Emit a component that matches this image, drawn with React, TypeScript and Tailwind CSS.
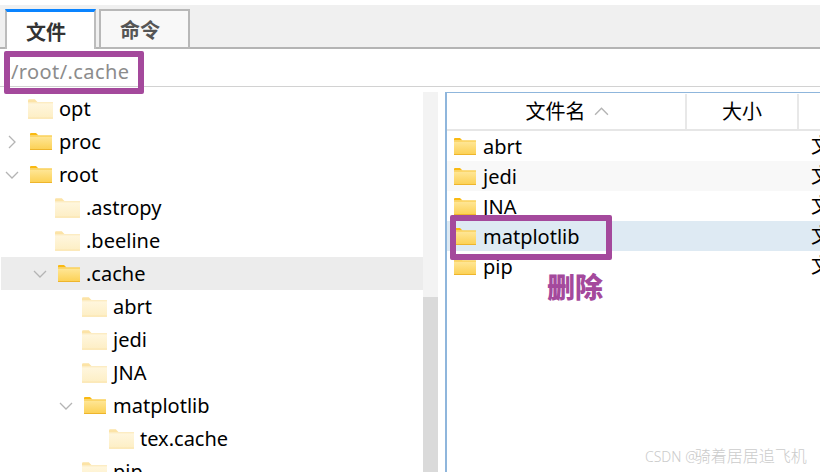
import React from "react";

type TreeNode = {
  name: string;
  indent: string;
  chevron?: "right" | "down";
  solid?: boolean;
  active?: boolean;
};

const tree: TreeNode[] = [
  { name: "opt", indent: "pl-0" },
  { name: "proc", indent: "pl-0", chevron: "right", solid: true },
  { name: "root", indent: "pl-0", chevron: "down", solid: true },
  { name: ".astropy", indent: "pl-[27px]" },
  { name: ".beeline", indent: "pl-[27px]" },
  { name: ".cache", indent: "pl-[27px]", chevron: "down", solid: true, active: true },
  { name: "abrt", indent: "pl-[54px]" },
  { name: "jedi", indent: "pl-[54px]" },
  { name: "JNA", indent: "pl-[54px]" },
  { name: "matplotlib", indent: "pl-[54px]", chevron: "down", solid: true },
  { name: "tex.cache", indent: "pl-[81px]" },
  { name: "pip", indent: "pl-[54px]" },
];

const files = ["abrt", "jedi", "JNA", "matplotlib", "pip"];

const fontStack = "font-['Noto_Sans','Noto_Sans_CJK_SC',sans-serif]";

function Folder({ pale }: { pale?: boolean }) {
  const id = pale ? "folder-pale" : "folder-solid";
  return (
    <svg
      viewBox="0 0 22 17"
      className={pale ? "h-[20px] w-[25px] shrink-0" : "h-[17px] w-[22px] shrink-0"}
    >
      <defs>
        <linearGradient id={id} x1="0" y1="0" x2="0" y2="1">
          <stop offset="0" stopColor={pale ? "#fff7e0" : "#ffe89c"} />
          <stop offset="1" stopColor={pale ? "#fdeec4" : "#fcd052"} />
        </linearGradient>
      </defs>
      <path d="M0 1a1 1 0 0 1 1-1h5l2.5 2.5H0z" fill={pale ? "#fce3a6" : "#f9b912"} />
      <rect x="0" y="2.5" width="22" height="14.5" rx="0.5" fill={`url(#${id})`} />
      <rect x="0" y="2.5" width="22" height="1" fill={pale ? "#fce9bb" : "#f8c63c"} />
      <rect x="0" y="16" width="22" height="1" fill={pale ? "#fbe4ae" : "#eeb52c"} />
    </svg>
  );
}

function Chevron({ dir, className }: { dir: "right" | "down" | "up"; className?: string }) {
  const d = dir === "right" ? "M4 1l6 6-6 6" : dir === "down" ? "M1 4l6 6 6-6" : "M1 10l6-6 6 6";
  return (
    <svg viewBox="0 0 14 14" className={className} fill="none" stroke="#b4b4b4" strokeWidth="1.3">
      <path d={d} />
    </svg>
  );
}

function TreeRow({ node }: { node: TreeNode }) {
  return (
    <div
      className={`flex h-[33px] shrink-0 items-center ${node.indent} ${
        node.active ? "ml-px bg-[#ececec] -indent-px" : ""
      }`}
    >
      <div className="flex w-[26px] shrink-0 items-center justify-center pr-[3px]">
        {node.chevron && <Chevron dir={node.chevron} className="h-[14px] w-[14px]" />}
      </div>
      <div className={`flex w-[33px] shrink-0 ${node.solid ? "pl-[4px]" : "pl-[2px]"}`}>
        <Folder pale={!node.solid} />
      </div>
      <span className="text-[20px] leading-none text-black">{node.name}</span>
    </div>
  );
}

export default function App() {
  return (
    <div className={`relative flex h-[472px] w-[820px] flex-col overflow-hidden bg-white ${fontStack}`}>
      {/* tab strip */}
      <div className="mt-[5px] flex h-[44px] shrink-0 items-end border-b-2 border-[#b4b4b4] bg-[#f0f0f0] pl-[5px]">
        <div className="-mb-[2px] flex h-[40px] w-[91px] items-center justify-center border-r-2 border-l-2 border-t-[3px] border-[#bcbcbc] border-t-[#0a84ff] bg-white pt-[4px] pr-[9px] text-[20px] font-bold text-[#333]">
          文件
        </div>
        <div className="ml-[3px] -mb-[2px] flex h-[40px] w-[91px] items-center justify-center border-2 border-[#b8b8b8] bg-[#f8f8f8] pt-[3px] pr-[9px] text-[20px] font-bold text-[#555]">
          命令
        </div>
      </div>

      {/* path bar */}
      <div className="flex h-[38px] shrink-0 items-center border-b border-[#d2d2d2] pt-[8px] pl-[11px] text-[20px] tracking-[0.4px] text-[#8c8c8c]">
        /root/.cache
      </div>

      <div className="mt-[5px] flex min-h-0 flex-1">
        {/* directory tree */}
        <div className="flex w-[423px] shrink-0 flex-col overflow-hidden">
          {tree.map((node) => (
            <TreeRow key={node.name + node.indent} node={node} />
          ))}
        </div>

        {/* tree scrollbar */}
        <div className="flex w-[15px] shrink-0 flex-col bg-[#f3f3f3]">
          <div className="h-[205px] shrink-0" />
          <div className="flex-1 bg-[#dadada]" />
        </div>

        {/* file list */}
        <div className="ml-[7px] flex min-w-0 flex-1 flex-col overflow-hidden border-t border-l-2 border-[#8fb6dc]">
          <div className="flex h-[38px] shrink-0 border-b-2 border-[#e6e6e6] pt-[1px] text-[20px] text-black">
            <div className="flex w-[240px] shrink-0 items-center justify-center gap-[8px] border-r-2 border-[#e8e8e8] pl-[2px]">
              <span>文件名</span>
              <Chevron dir="up" className="h-[15px] w-[15px]" />
            </div>
            <div className="flex w-[112px] shrink-0 items-center justify-center border-r-2 border-[#e8e8e8]">
              大小
            </div>
          </div>
          {files.map((name, i) => (
            <div
              key={name}
              className={`flex h-[30px] shrink-0 items-center pl-[7px] text-[20px] leading-none text-black ${
                name === "matplotlib" ? "bg-[#deeaf3]" : i === 1 ? "bg-[#f8f8f8]" : ""
              }`}
            >
              <div className="flex w-[29px] shrink-0">
                <Folder />
              </div>
              <span className="w-[328px] shrink-0 pt-[2px]">{name}</span>
              <span className="whitespace-nowrap">文件夹</span>
            </div>
          ))}
        </div>
      </div>

      {/* annotations drawn on top of the window */}
      <div className="absolute top-[51px] left-[4px] h-[43px] w-[140px] rounded-[2px] border-[6px] border-[#a4499c]" />
      <div className="absolute top-[215px] left-[450px] h-[45px] w-[162px] rounded-[2px] border-[6px] border-[#a4499c]" />
      <div className="absolute top-[268px] left-[547px] text-[28px] leading-[38px] font-black text-[#a4499c]">
        删除
      </div>
      <div className="absolute top-[446px] left-[645px] text-[14px] leading-[20px] font-light whitespace-nowrap text-[#cbcbcb]">
        CSDN @<span className="-ml-[3px] text-[16px]">骑着居居追飞机</span>
      </div>
    </div>
  );
}
